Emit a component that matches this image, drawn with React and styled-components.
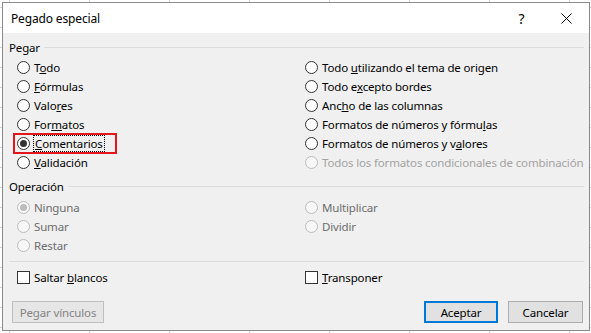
import React from 'react';
import styled, { createGlobalStyle } from 'styled-components';

const GlobalStyle = createGlobalStyle`
  html, body {
    margin: 0;
    padding: 0;
  }
  body {
    width: 591px;
    height: 333px;
    overflow: hidden;
    background-color: #ffffff;
    // Excel sheet grid behind the dialog
    background-image:
      linear-gradient(to right, #d4d4d4 1px, transparent 1px),
      linear-gradient(to bottom, #d4d4d4 1px, transparent 1px);
    background-size: 80px 20px;
    background-position: 9px 7px;
    font-family: "Noto Sans", "Open Sans", sans-serif;
    font-size: 11.5px;
    letter-spacing: -0.15px;
    color: #000;
  }
`;

const Dialog = styled.div`
  margin: 2px 0 0 2px;
  width: 588px;
  height: 329px;
  box-sizing: border-box;
  border: 1px solid #8a8a8a;
  background: #f0f0f0;
  display: flex;
  flex-direction: column;
`;

const TitleBar = styled.div`
  height: 30px;
  background: #ffffff;
  display: flex;
  align-items: center;
  padding-left: 8px;
  flex-shrink: 0;
`;

const Title = styled.span`
  flex: 1;
  font-size: 12px;
  color: #000;
`;

const TitleButton = styled.span`
  width: 45px;
  height: 30px;
  display: flex;
  align-items: center;
  justify-content: center;
  font-size: 14px;
  color: #000;
`;

const Body = styled.div`
  flex: 1;
  display: flex;
  flex-direction: column;
  padding: 7px 5px 6px 6px;
`;

const Legend = styled.div`
  display: flex;
  align-items: center;
  height: 14px;
  gap: 4px;
  margin-top: ${(p) => p.$top || 0}px;

  &::after {
    content: '';
    flex: 1;
    height: 1px;
    background: #dcdcdc;
  }
`;

const OptionGrid = styled.div`
  display: grid;
  grid-template-columns: 288px 1fr;
  grid-auto-flow: column;
  grid-template-rows: repeat(${(p) => p.$rows}, 19px);
  padding-left: 8px;
  margin-top: ${(p) => p.$top}px;
`;

const Option = styled.label`
  position: relative;
  display: flex;
  align-items: center;
  gap: 4px;
  white-space: nowrap;
  color: ${(p) => (p.$disabled === 'light' ? '#a2a2a2' : p.$disabled ? '#6d6d6d' : '#000')};

  ${(p) =>
    p.$marked &&
    `
    &::after {
      content: '';
      position: absolute;
      left: -4px;
      top: -1px;
      width: 104px;
      height: 21px;
      box-sizing: border-box;
      border: 2px solid #e3161b;
    }
  `}
`;

const Radio = styled.span`
  width: 13px;
  height: 13px;
  box-sizing: border-box;
  border-radius: 50%;
  border: 1px solid ${(p) => (p.$disabled ? '#bcbcbc' : '#333')};
  background: ${(p) => (p.$disabled ? '#f7f7f7' : '#fff')};
  display: flex;
  align-items: center;
  justify-content: center;
  flex-shrink: 0;

  &::before {
    content: '';
    display: ${(p) => (p.$checked ? 'block' : 'none')};
    width: 7px;
    height: 7px;
    border-radius: 50%;
    background: ${(p) => (p.$disabled ? '#bcbcbc' : '#333')};
  }
`;

const Check = styled.span`
  width: 13px;
  height: 13px;
  box-sizing: border-box;
  border: 1px solid #333;
  background: #fff;
  flex-shrink: 0;
`;

const Focus = styled.span`
  outline: 1px dotted #000;
  outline-offset: 0;
  padding: 0 1px;
  line-height: 14px;
`;

const Separator = styled.div`
  height: 1px;
  background: #dcdcdc;
  margin-top: 6px;
`;

const CheckRow = styled.div`
  display: grid;
  grid-template-columns: 288px 1fr;
  height: 19px;
  padding-left: 8px;
  margin-top: 6px;
`;

const ButtonRow = styled.div`
  display: flex;
  align-items: center;
  gap: 10px;
  margin-top: 14px;
  padding: 0 1px 0 3px;
`;

const Button = styled.button`
  height: 22px;
  width: ${(p) => p.$w}px;
  box-sizing: border-box;
  font-family: inherit;
  font-size: 11.5px;
  letter-spacing: inherit;
  padding: 0;
  background: ${(p) => (p.$disabled ? '#e6e6e6' : '#e1e1e1')};
  color: ${(p) => (p.$disabled ? '#838383' : '#000')};
  border: ${(p) => (p.$primary ? '2px solid #0078d7' : p.$disabled ? '1px solid #bfbfbf' : '1px solid #adadad')};
`;

const Spacer = styled.div`
  flex: 1;
`;

const pasteOptions = [
  { label: <>T<u>o</u>do</> },
  { label: <><u>F</u>órmulas</> },
  { label: <>Valo<u>r</u>es</> },
  { label: <>For<u>m</u>atos</> },
  { label: <Focus><u>C</u>omentarios</Focus>, checked: true, marked: true },
  { label: <><u>V</u>alidación</> },
  { label: <>Todo <u>u</u>tilizando el tema de origen</> },
  { label: <>Todo e<u>x</u>cepto bordes</> },
  { label: <>Anc<u>h</u>o de las columnas</> },
  { label: <>Formatos de números y fórmu<u>l</u>as</> },
  { label: <>Formatos de números y v<u>a</u>lores</> },
  { label: 'Todos los formatos condicionales de combinación', disabled: 'light' },
];

const operationOptions = [
  { label: 'Ninguna', checked: true },
  { label: 'Sumar' },
  { label: 'Restar' },
  { label: 'Multiplicar' },
  { label: 'Dividir' },
  { label: '' },
];

const App = () => {
  return (
    <>
      <GlobalStyle />
      <Dialog>
        <TitleBar>
          <Title>Pegado especial</Title>
          <TitleButton>?</TitleButton>
          <TitleButton>
            <svg width="11" height="11" viewBox="0 0 11 11">
              <path d="M0.5 0.5 L10.5 10.5 M10.5 0.5 L0.5 10.5" stroke="#000" strokeWidth="1" />
            </svg>
          </TitleButton>
        </TitleBar>

        <Body>
          <Legend>Pegar</Legend>
          <OptionGrid $rows={6} $top={4}>
            {pasteOptions.map((o, i) => (
              <Option key={i} $disabled={o.disabled} $marked={o.marked}>
                <Radio $checked={o.checked} $disabled={!!o.disabled} />
                <span>{o.label}</span>
              </Option>
            ))}
          </OptionGrid>

          <Legend $top={7}>Operación</Legend>
          <OptionGrid $rows={3} $top={5}>
            {operationOptions.map((o, i) =>
              o.label ? (
                <Option key={i} $disabled>
                  <Radio $checked={o.checked} $disabled />
                  <span>{o.label}</span>
                </Option>
              ) : (
                <span key={i} />
              )
            )}
          </OptionGrid>

          <Separator />

          <CheckRow>
            <Option>
              <Check />
              <span>Saltar <u>b</u>lancos</span>
            </Option>
            <Option>
              <Check />
              <span><u>T</u>ransponer</span>
            </Option>
          </CheckRow>

          <ButtonRow>
            <Button $w={92} $disabled>Pegar vínculos</Button>
            <Spacer />
            <Button $w={74} $primary>Aceptar</Button>
            <Button $w={75}>Cancelar</Button>
          </ButtonRow>
        </Body>
      </Dialog>
    </>
  );
};

export default App;
